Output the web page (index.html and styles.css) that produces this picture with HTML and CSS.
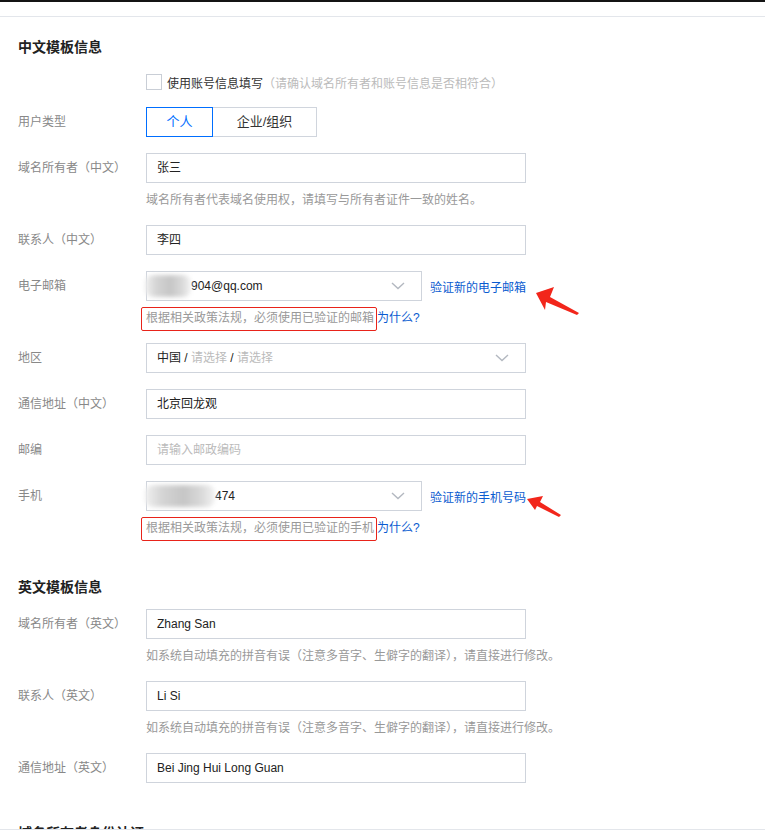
FILE: index.html
```html
<!DOCTYPE html>
<html lang="zh-CN">
<head>
<meta charset="utf-8">
<title>域名模板信息</title>
<link rel="stylesheet" href="styles.css">
</head>
<body>
<div class="topbar"></div>
<div class="header-space"></div>
<main class="page">
  <section class="section">
    <h3 class="sec-title">中文模板信息</h3>
    <div class="row row-check">
      <div class="label"></div>
      <div class="field">
        <label class="check"><span class="box"></span><span class="check-text">使用账号信息填写</span><span class="muted">（请确认域名所有者和账号信息是否相符合）</span></label>
      </div>
    </div>
    <div class="row">
      <div class="label">用户类型</div>
      <div class="field">
        <div class="seg"><span class="seg-item active">个人</span><span class="seg-item wide">企业/组织</span></div>
      </div>
    </div>
    <div class="row">
      <div class="label">域名所有者（中文）</div>
      <div class="field">
        <div class="input">张三</div>
        <div class="hint">域名所有者代表域名使用权，请填写与所有者证件一致的姓名。</div>
      </div>
    </div>
    <div class="row">
      <div class="label">联系人（中文）</div>
      <div class="field"><div class="input">李四</div></div>
    </div>
    <div class="row">
      <div class="label">电子邮箱</div>
      <div class="field">
        <div class="inline">
          <div class="input select short"><span class="blur b-email"></span><span class="val">904@qq.com</span><svg class="chev" viewBox="0 0 14 8" width="14" height="8"><path d="M1 1l6 5.5L13 1" fill="none" stroke="#b3b8c0" stroke-width="1.4"/></svg></div>
          <a class="link">验证新的电子邮箱</a>
        </div>
        <div class="hint"><span class="marked">根据相关政策法规，必须使用已验证的邮箱</span><a class="why">为什么?</a></div>
      </div>
    </div>
    <div class="row">
      <div class="label">地区</div>
      <div class="field">
        <div class="input select"><span class="val">中国 / <span class="ph">请选择</span> / <span class="ph">请选择</span></span><svg class="chev" viewBox="0 0 14 8" width="14" height="8"><path d="M1 1l6 5.5L13 1" fill="none" stroke="#b3b8c0" stroke-width="1.4"/></svg></div>
      </div>
    </div>
    <div class="row">
      <div class="label">通信地址（中文）</div>
      <div class="field"><div class="input">北京回龙观</div></div>
    </div>
    <div class="row">
      <div class="label">邮编</div>
      <div class="field"><div class="input ph">请输入邮政编码</div></div>
    </div>
    <div class="row">
      <div class="label">手机</div>
      <div class="field">
        <div class="inline">
          <div class="input select short"><span class="blur b-phone"></span><span class="val">474</span><svg class="chev" viewBox="0 0 14 8" width="14" height="8"><path d="M1 1l6 5.5L13 1" fill="none" stroke="#b3b8c0" stroke-width="1.4"/></svg></div>
          <a class="link">验证新的手机号码</a>
        </div>
        <div class="hint"><span class="marked">根据相关政策法规，必须使用已验证的手机</span><a class="why">为什么?</a></div>
      </div>
    </div>
  </section>

  <section class="section sec-gap">
    <h3 class="sec-title">英文模板信息</h3>
    <div class="row row-first">
      <div class="label">域名所有者（英文）</div>
      <div class="field">
        <div class="input">Zhang San</div>
        <div class="hint">如系统自动填充的拼音有误（注意多音字、生僻字的翻译），请直接进行修改。</div>
      </div>
    </div>
    <div class="row">
      <div class="label">联系人（英文）</div>
      <div class="field">
        <div class="input">Li Si</div>
        <div class="hint">如系统自动填充的拼音有误（注意多音字、生僻字的翻译），请直接进行修改。</div>
      </div>
    </div>
    <div class="row">
      <div class="label">通信地址（英文）</div>
      <div class="field"><div class="input">Bei Jing Hui Long Guan</div></div>
    </div>
  </section>

  <section class="section sec-gap">
    <h3 class="sec-title">域名所有者身份认证</h3>
  </section>

  <svg class="arrows" width="765" height="838" viewBox="0 0 765 838">
    <polygon points="536,293 554,287 550,297 579,313 577,315 546,302 545,310" fill="#f2261b"/>
    <polygon points="527,499 543,496 540,502 561,515 559,517 537,506 535,510" fill="#f2261b"/>
  </svg>
</main>
<div class="footer-bar"></div>
</body>
</html>
```

FILE: styles.css
```css
* { box-sizing: border-box; }
html, body { margin: 0; padding: 0; background: #fff; }
body {
  font-family: "Liberation Sans", "Noto Sans CJK SC", sans-serif;
  font-size: 12px;
  color: #333;
  width: 765px;
  height: 838px;
  overflow: hidden;
}
.topbar { height: 2px; background: #141414; }
.header-space { height: 15px; border-bottom: 1px solid #e3e6eb; }
.page { position: relative; padding: 0 0 0 18px; }
.section { padding-top: 20px; }
.sec-gap { padding-top: 40px; }
.sec-title {
  margin: 0;
  font-size: 14px;
  font-weight: bold;
  line-height: 20px;
  color: #222;
}
.row {
  display: grid;
  grid-template-columns: 128px 1fr;
  margin-top: 16px;
}
.row-check { margin-top: 17px; }
.row-check + .row { margin-top: 17px; }
.row-first { margin-top: 12px; }
.label {
  line-height: 30px;
  color: #888;
  white-space: nowrap;
}
.row-check .label { line-height: 16px; }
.check { display: flex; align-items: center; height: 16px; }
.box {
  width: 16px; height: 16px;
  border: 1px solid #c9ced6;
  background: #fff;
  margin-right: 5px;
}
.check-text { color: #333; }
.muted { color: #bbb; }
.seg { display: flex; height: 30px; }
.seg-item {
  width: 67px;
  border: 1px solid #d0d5dd;
  text-align: center;
  line-height: 28px;
  font-size: 13px;
  color: #333;
}
.seg-item.active { border-color: #006eff; color: #006eff; }
.seg-item.wide { width: 104px; border-left: none; }
.input {
  width: 380px;
  height: 30px;
  border: 1px solid #cfd4dc;
  padding: 0 10px;
  line-height: 28px;
  color: #222;
  white-space: nowrap;
}
.ph { color: #bbb; }
.select { display: flex; align-items: center; position: relative; }
.select .val { flex: 1; }
.select.short { width: 276px; padding-left: 0; }
.chev { margin-right: 6px; }
.inline { display: flex; align-items: center; }
.link { color: #0a5bd0; margin-left: 8px; text-decoration: none; }
.blur {
  display: inline-block;
  height: 22px;
  border-radius: 8px;
  filter: blur(2px);
  background: linear-gradient(90deg, #f0f0f0 0%, #d4d4d4 25%, #c6c6c6 55%, #d9d9d9 80%, #f2f2f2 100%);
  margin-left: -2px;
}
.b-email { width: 46px; margin-right: 0; }
.b-phone { width: 70px; }
.hint {
  margin-top: 8px;
  line-height: 18px;
  color: #999;
  white-space: nowrap;
}
.marked { position: relative; color: #999; }
.marked::after {
  content: "";
  position: absolute;
  left: -5px; top: -4px; right: -3px; bottom: -6px;
  border: 1px solid #e8231a;
  border-radius: 2px;
}
.why { color: #0a5bd0; margin-left: 3px; }
.arrows { position: absolute; left: 0; top: -17px; pointer-events: none; }
.footer-bar {
  position: fixed;
  left: 0; right: 0; bottom: 0;
  height: 9px;
  background: #fff;
  border-top: 1px solid #e3e6eb;
}
```
